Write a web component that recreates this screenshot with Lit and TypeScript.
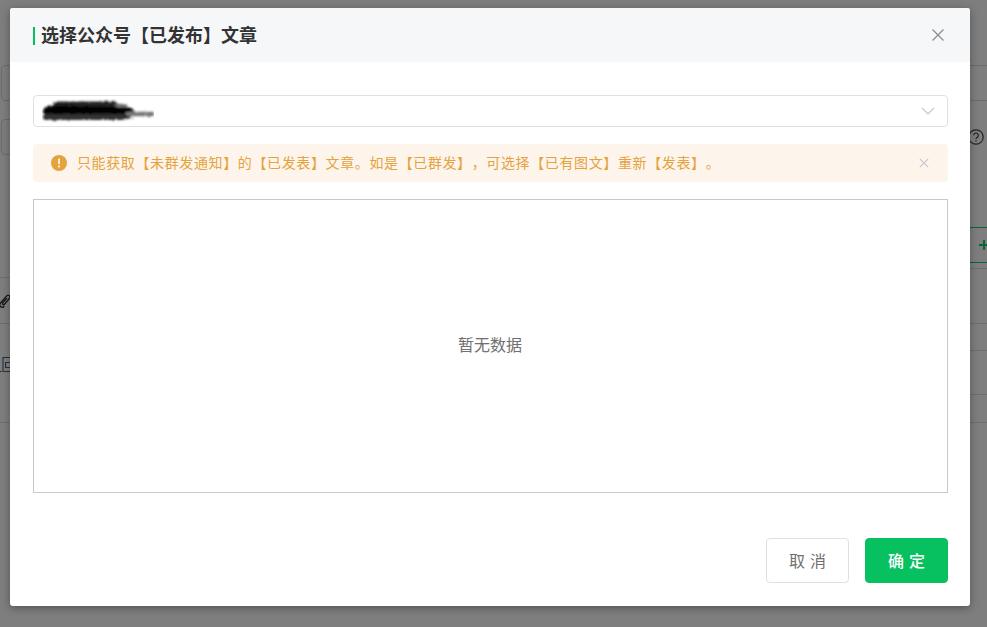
import { LitElement, html, css } from "lit";
import { customElement } from "lit/decorators.js";

@customElement("app-root")
export class AppRoot extends LitElement {
  static styles = css`
    :host { display: block; width: 987px; height: 627px; position: relative; overflow: hidden; font-family: "Noto Sans CJK SC", "Noto Sans", sans-serif; text-spacing-trim: space-all; }
    .page { height: 627px; background: #fff; display: flex; flex-direction: column; padding-top: 65px; box-sizing: border-box; overflow: hidden; }
    .row { display: grid; grid-template-columns: 500px 487px; box-sizing: border-box; flex: none; color: #333; }
    .side { box-sizing: border-box; display: flex; align-items: center; min-width: 0; }
    .end { justify-content: flex-end; }
    .line { border-top: 1px solid #dfdfdf; }
    .wide { display: block; height: 36px; margin-left: 1px; width: 1000px; flex: none; box-sizing: border-box; border: 1px solid #d8d8d8; border-radius: 4px; }
    .h18 { height: 18px; }
    .h36 { height: 36px; }
    .h72 { height: 72px; }
    .h5 { height: 5px; }
    .h9 { height: 9px; }
    .h46 { height: 46px; }
    .h27 { height: 27px; }
    .h44 { height: 44px; }
    .h28 { height: 28px; }
    .h205 { height: 205px; }
    .green { border-top: 1px solid #10d070; border-bottom: 1px solid #10d070; color: #10d070; }
    .lbox { width: 60px; height: 36px; margin-left: 1px; border: 1px solid #d8d8d8; border-radius: 4px; box-sizing: border-box; }
    .help { margin-right: 3px; display: block; }
    .plus { display: block; flex: none; margin-right: -2px; }
    .clip { display: block; margin-left: -3px; }
    .mini { display: block; align-self: flex-start; margin-top: 7px; }
    .overlay { position: absolute; inset: 0; background: rgba(0, 2, 0, 0.51); padding: 8px 17px 21px 10px; box-sizing: border-box; display: flex; }
    .dialog { flex: 1; background: #fff; border-radius: 3px; box-shadow: 0 2px 8px rgba(0, 0, 0, 0.35); display: flex; flex-direction: column; overflow: hidden; }
    .head { height: 54px; flex: none; background: #f6f7f9; display: flex; align-items: center; padding: 0 25px 0 23px; }
    .bar { width: 2px; height: 18px; background: #07c160; margin-right: 6px; margin-top: 1px; }
    .title { flex: 1; font-size: 18px; line-height: 24px; font-weight: 700; color: #333; margin-top: -3px; }
    .x { display: block; flex: none; }
    .body { flex: 1; display: flex; flex-direction: column; padding: 33px 22px 23px 23px; }
    .select { height: 32px; flex: none; box-sizing: border-box; border: 1px solid #dfdfe6; border-radius: 4px; display: flex; align-items: center; justify-content: space-between; padding: 0 12px 0 8px; }
    .smudge { display: block; }
    .alert { height: 38px; flex: none; margin-top: 17px; background: #fdf5ec; border-radius: 4px; display: flex; align-items: center; padding: 0 19px 0 18px; color: #e6a23c; font-size: 14px; letter-spacing: 0.62px; }
    .alert .msg { flex: 1; margin: -2px 0 0 10px; line-height: 20px; }
    .empty { height: 294px; flex: none; margin-top: 17px; box-sizing: border-box; border: 1px solid #c8c8c8; display: flex; align-items: center; justify-content: center; font-size: 16px; color: #707070; padding: 0 1px 5px 0; }
    .foot { margin-top: 45px; display: flex; justify-content: flex-end; gap: 16px; }
    .btn { width: 83px; height: 45px; box-sizing: border-box; border-radius: 4px; font: inherit; font-size: 16px; letter-spacing: 5px; padding: 0 0 2px 5px; cursor: pointer; }
    .cancel { background: #fff; border: 1px solid #dfdfe6; color: #707070; }
    .ok { background: #07c160; border: 1px solid #07c160; color: #fff; font-weight: 500; }
  `;

  render() {
    return html`
      <div class="page">
        <div class="wide"></div>
        <div class="row h18"></div>
        <div class="row h36">
          <div class="side"><div class="lbox"></div></div>
          <div class="side end">
            <svg class="help" width="16" height="16" viewBox="0 0 16 16" fill="none" stroke="#444" stroke-width="1.2">
              <circle cx="8" cy="8" r="7.2"></circle>
              <path d="M5.7 6.3a2.3 2.3 0 1 1 3.6 1.900c-.8.5-1.300 1-1.300 1.900"></path>
              <path d="M8 11.200v1.200"></path>
            </svg>
          </div>
        </div>
        <div class="row h72"></div>
        <div class="row h36">
          <div class="side"></div>
          <div class="side end green">
            <svg class="plus" width="10" height="12" viewBox="0 0 10 12" fill="none" stroke="currentColor" stroke-width="2"><path d="M0 6h10M5 1v10"></path></svg>
          </div>
        </div>
        <div class="row h5"></div>
        <div class="row h9"><div class="side"></div><div class="side line"></div></div>
        <div class="row h46">
          <div class="side line">
            <svg class="clip" width="16" height="18" viewBox="0 0 16 18" fill="none" stroke="#333" stroke-width="1.400" stroke-linecap="round">
              <path d="M9.500 6.500 5.800 10.800c-1 1.200.6 2.600 1.700 1.400l5-6c1.500-1.800-1-4.200-2.800-2.300L3.500 11c-2.200 2.600 1 5.800 3.500 3.400"></path>
            </svg>
          </div>
          <div class="side"></div>
        </div>
        <div class="row h27"><div class="side line"></div><div class="side line"></div></div>
        <div class="row h44">
          <div class="side">
            <svg class="mini" width="12" height="15" viewBox="0 0 12 15" fill="none" stroke="#4a5f86" stroke-width="1.100">
              <path d="M12 .5H3V14.500H12"></path>
              <path d="M12 5.500H5.500V10.500H12"></path>
              <path d="M0 14.500H1.500" stroke="#555"></path>
            </svg>
          </div>
          <div class="side line"></div>
        </div>
        <div class="row h28"><div class="side"></div><div class="side line"></div></div>
        <div class="row h205"><div class="side line"></div><div class="side line"></div></div>
      </div>
      <div class="overlay">
        <div class="dialog">
          <div class="head">
            <span class="bar"></span>
            <span class="title">选择公众号【已发布】文章</span>
            <svg class="x" width="14" height="14" viewBox="0 0 14 14" fill="none" stroke="#8a8a8f" stroke-width="1.200"><path d="M1.500 1.500l11 11M12.500 1.500l-11 11"></path></svg>
          </div>
          <div class="body">
            <div class="select">
              <svg class="smudge" width="112" height="24" viewBox="0 0 112 24" fill="none" stroke-linecap="round">
                <defs>
                  <filter id="b" x="-10%" y="-50%" width="120%" height="200%">
                    <feTurbulence type="fractalNoise" baseFrequency="0.3" numOctaves="2" seed="4" result="n"></feTurbulence>
                    <feDisplacementMap in="SourceGraphic" in2="n" scale="3" result="d"></feDisplacementMap>
                    <feGaussianBlur in="d" stdDeviation="1"></feGaussianBlur>
                  </filter>
                </defs>
                <g filter="url(#b)">
                  <path d="M15 6 L72 6" stroke="#222" stroke-width="7"></path>
                  <path d="M74 6 L84 7" stroke="#666" stroke-width="3"></path>
                  <path d="M7 12 L87 14" stroke="#000" stroke-width="11"></path>
                  <path d="M4 18 L80 18" stroke="#333" stroke-width="6"></path>
                  <path d="M86 15 L110 15" stroke="#777" stroke-width="4.500"></path>
                </g>
              </svg>
              <svg width="14" height="8" viewBox="0 0 14 8" fill="none" stroke="#c6c8cf" stroke-width="1.200"><path d="M1 1l6 6 6-6"></path></svg>
            </div>
            <div class="alert">
              <svg width="16" height="16" viewBox="0 0 16 16"><circle cx="8" cy="8" r="8" fill="#e6a23c"></circle><rect x="7.200" y="3.500" width="1.600" height="6" rx="0.800" fill="#fff"></rect><circle cx="8" cy="11.500" r="1" fill="#fff"></circle></svg>
              <span class="msg">只能获取【未群发通知】的【已发表】文章。如是【已群发】，可选择【已有图文】重新【发表】。</span>
              <svg class="x" width="10" height="10" viewBox="0 0 10 10" fill="none" stroke="#c8c9cc" stroke-width="1.200"><path d="M.8.800l8.400 8.400M9.200.800L.8 9.200"></path></svg>
            </div>
            <div class="empty">暂无数据</div>
            <div class="foot">
              <button class="btn cancel">取消</button>
              <button class="btn ok">确定</button>
            </div>
          </div>
        </div>
      </div>
    `;
  }
}
